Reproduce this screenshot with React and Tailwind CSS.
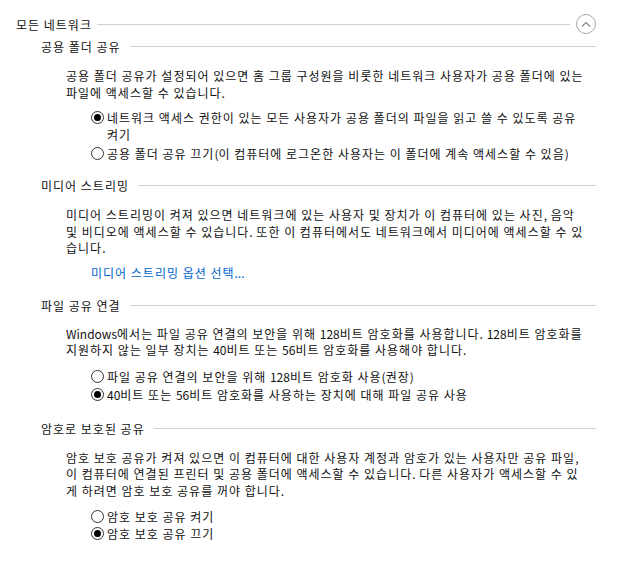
import React from "react";

const font = { fontFamily: '"Noto Sans CJK KR", "Noto Sans", sans-serif' };

// hangul and spaces get a little extra spacing, latin and digits stay tight
function T({ children }) {
  const parts = String(children).split(/([\uAC00-\uD7A3 ]+)/);
  return parts.map((p, i) =>
    /^[\uAC00-\uD7A3 ]+$/.test(p) ? (
      <span key={i} className="tracking-[1px]">
        {p}
      </span>
    ) : (
      <React.Fragment key={i}>{p}</React.Fragment>
    )
  );
}

function Radio({ checked, children }) {
  return (
    <div className="flex items-start">
      <span className="mt-[2px] flex h-[13px] w-[13px] shrink-0 items-center justify-center rounded-full border border-[#333] bg-white">
        {checked && <span className="h-[7px] w-[7px] rounded-full bg-[#000]" />}
      </span>
      <span className="ml-[3px] leading-[17px]">{children}</span>
    </div>
  );
}

function SubHeader({ title }) {
  return (
    <div className="flex items-center pl-[41px] pr-[35px] leading-[17px]">
      <span className="whitespace-nowrap">
        <T>{title}</T>
      </span>
      <span className="ml-[9px] h-px flex-1 bg-[#d0d0d0]" />
    </div>
  );
}

function Para({ lines }) {
  return (
    <p className="pl-[66px] leading-[16.5px] whitespace-nowrap">
      {lines.map((l, i) => (
        <React.Fragment key={i}>
          <T>{l}</T>
          {i < lines.length - 1 && <br />}
        </React.Fragment>
      ))}
    </p>
  );
}

export default function App() {
  return (
    <div className="min-h-[564px] w-[631px] bg-white text-[12px] text-[#111]" style={font}>
      <div className="pt-[14px]">
        <div className="flex items-center pl-[16px] pr-[35px] leading-[17px]">
          <span className="whitespace-nowrap">
            <T>모든 네트워크</T>
          </span>
          <span className="ml-[5px] mr-[6px] h-px flex-1 bg-[#d0d0d0]" />
          <svg width="20" height="20" viewBox="0 0 20 20" className="shrink-0">
            <circle cx="10" cy="10" r="9.5" fill="none" stroke="#a8a8a8" strokeWidth="1" />
            <path d="M6 12.5 L10 8.5 L14 12.5" fill="none" stroke="#808080" strokeWidth="1.1" />
          </svg>
        </div>

        <div className="mt-[4px]">
          <SubHeader title="공용 폴더 공유" />
          <div className="mt-[13px]">
            <Para
              lines={[
                "공용 폴더 공유가 설정되어 있으면 홈 그룹 구성원을 비롯한 네트워크 사용자가 공용 폴더에 있는",
                "파일에 액세스할 수 있습니다.",
              ]}
            />
          </div>
          <div className="mt-[8px] flex flex-col gap-[2px] pl-[91px] whitespace-nowrap">
            <Radio checked>
              <T>네트워크 액세스 권한이 있는 모든 사용자가 공용 폴더의 파일을 읽고 쓸 수 있도록 공유</T>
              <br />
              <T>켜기</T>
            </Radio>
            <Radio>
              <T>공용 폴더 공유 끄기(이 컴퓨터에 로그온한 사용자는 이 폴더에 계속 액세스할 수 있음)</T>
            </Radio>
          </div>
        </div>

        <div className="mt-[15px]">
          <SubHeader title="미디어 스트리밍" />
          <div className="mt-[13px]">
            <Para
              lines={[
                "미디어 스트리밍이 켜져 있으면 네트워크에 있는 사용자 및 장치가 이 컴퓨터에 있는 사진, 음악",
                "및 비디오에 액세스할 수 있습니다. 또한 이 컴퓨터에서도 네트워크에서 미디어에 액세스할 수 있",
                "습니다.",
              ]}
            />
          </div>
          <div className="mt-[7px] pl-[91px] leading-[17px] text-[#0066cc]">
            <T>미디어 스트리밍 옵션 선택...</T>
          </div>
        </div>

        <div className="mt-[16px]">
          <SubHeader title="파일 공유 연결" />
          <div className="mt-[12px]">
            <Para
              lines={[
                "Windows에서는 파일 공유 연결의 보안을 위해 128비트 암호화를 사용합니다. 128비트 암호화를",
                "지원하지 않는 일부 장치는 40비트 또는 56비트 암호화를 사용해야 합니다.",
              ]}
            />
          </div>
          <div className="mt-[9px] flex flex-col gap-[1px] pl-[91px] whitespace-nowrap">
            <Radio>
              <T>파일 공유 연결의 보안을 위해 128비트 암호화 사용(권장)</T>
            </Radio>
            <Radio checked>
              <T>40비트 또는 56비트 암호화를 사용하는 장치에 대해 파일 공유 사용</T>
            </Radio>
          </div>
        </div>

        <div className="mt-[17px]">
          <SubHeader title="암호로 보호된 공유" />
          <div className="mt-[13px]">
            <Para
              lines={[
                "암호 보호 공유가 켜져 있으면 이 컴퓨터에 대한 사용자 계정과 암호가 있는 사용자만 공유 파일,",
                "이 컴퓨터에 연결된 프린터 및 공용 폴더에 액세스할 수 있습니다. 다른 사용자가 액세스할 수 있",
                "게 하려면 암호 보호 공유를 꺼야 합니다.",
              ]}
            />
          </div>
          <div className="mt-[9px] flex flex-col pl-[91px] whitespace-nowrap">
            <Radio>
              <T>암호 보호 공유 켜기</T>
            </Radio>
            <Radio checked>
              <T>암호 보호 공유 끄기</T>
            </Radio>
          </div>
        </div>
      </div>
    </div>
  );
}
